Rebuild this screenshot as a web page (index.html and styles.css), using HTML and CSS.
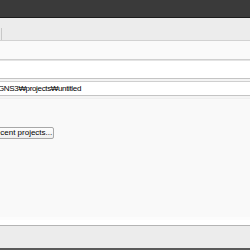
FILE: index.html
```html
<!DOCTYPE html>
<html lang="en">
<head>
    <meta charset="UTF-8">
    <title>New project</title>
    <link rel="stylesheet" href="styles.css">
</head>
<body>
    <div class="titlebar"></div>
    <div class="tabbar"><div class="tab"></div></div>

    <div class="dialog">
        <div class="header"></div>
        <div class="field first"><div class="input"></div></div>
        <div class="field"><div class="input path">GNS3&#8361;projects&#8361;untitled</div></div>
        <div class="recent">
            <button class="btn" type="button">Recent projects...</button>
        </div>
        <div class="edge"></div>
    </div>

    <div class="footer"></div>
</body>
</html>
```

FILE: styles.css
```css
body {
    margin: 0;
    width: 250px;
    height: 250px;
    overflow: hidden;
    font-family: "Liberation Sans", Arial, sans-serif;
    font-size: 8px;
    color: #000;
    background: #ececec;
}
.titlebar {
    height: 17px;
    background: #3a3a3a;
    border-bottom: 1px solid #1c1c1c;
}
.tabbar {
    height: 12px;
    padding-top: 10px;
    background: #ececec;
    border-bottom: 1px solid #d2d2d2;
}
.tab {
    width: 1px;
    height: 12px;
    border-right: 1px solid #c8c8c8;
}
.dialog {
    background: #f9f9f9;
}
.header {
    height: 18px;
    background: #fafafa;
    border-bottom: 1px solid #d0d0d0;
    box-shadow: 0 1px 0 #e4e4e4;
    margin-bottom: 1px;
}
.field {
    padding-bottom: 2px;
    background: #f4f4f4;
}
.input {
    background: #fff;
    border-bottom: 1px solid #c4c4c4;
}
.first .input {
    height: 17px;
}
.path {
    height: 13px;
    line-height: 14px;
    border-top: 1px solid #cfcfcf;
    font-size: 8px;
    letter-spacing: -0.35px;
    text-indent: -2px;
    white-space: nowrap;
}
.recent {
    height: 119px;
    padding-top: 28px;
    box-sizing: border-box;
    background: #f9f9f9;
    border-top: 1px solid #efefef;
}
.btn {
    display: block;
    margin-left: -13px;
    height: 12px;
    padding: 0 1px 0 2px;
    font-family: inherit;
    font-size: 8px;
    line-height: 10px;
    color: #000;
    background: linear-gradient(#fdfdfd, #efefef);
    border: 1px solid #a8a8a8;
    border-radius: 2px;
}
.edge {
    height: 5px;
    background: #fff;
    border-top: 3px solid #fcfcfc;
    border-bottom: 1px solid #b4b4b4;
}
.footer {
    height: 22px;
    background: #ececec;
    border-bottom: 2px solid #5a5a5a;
}
```
